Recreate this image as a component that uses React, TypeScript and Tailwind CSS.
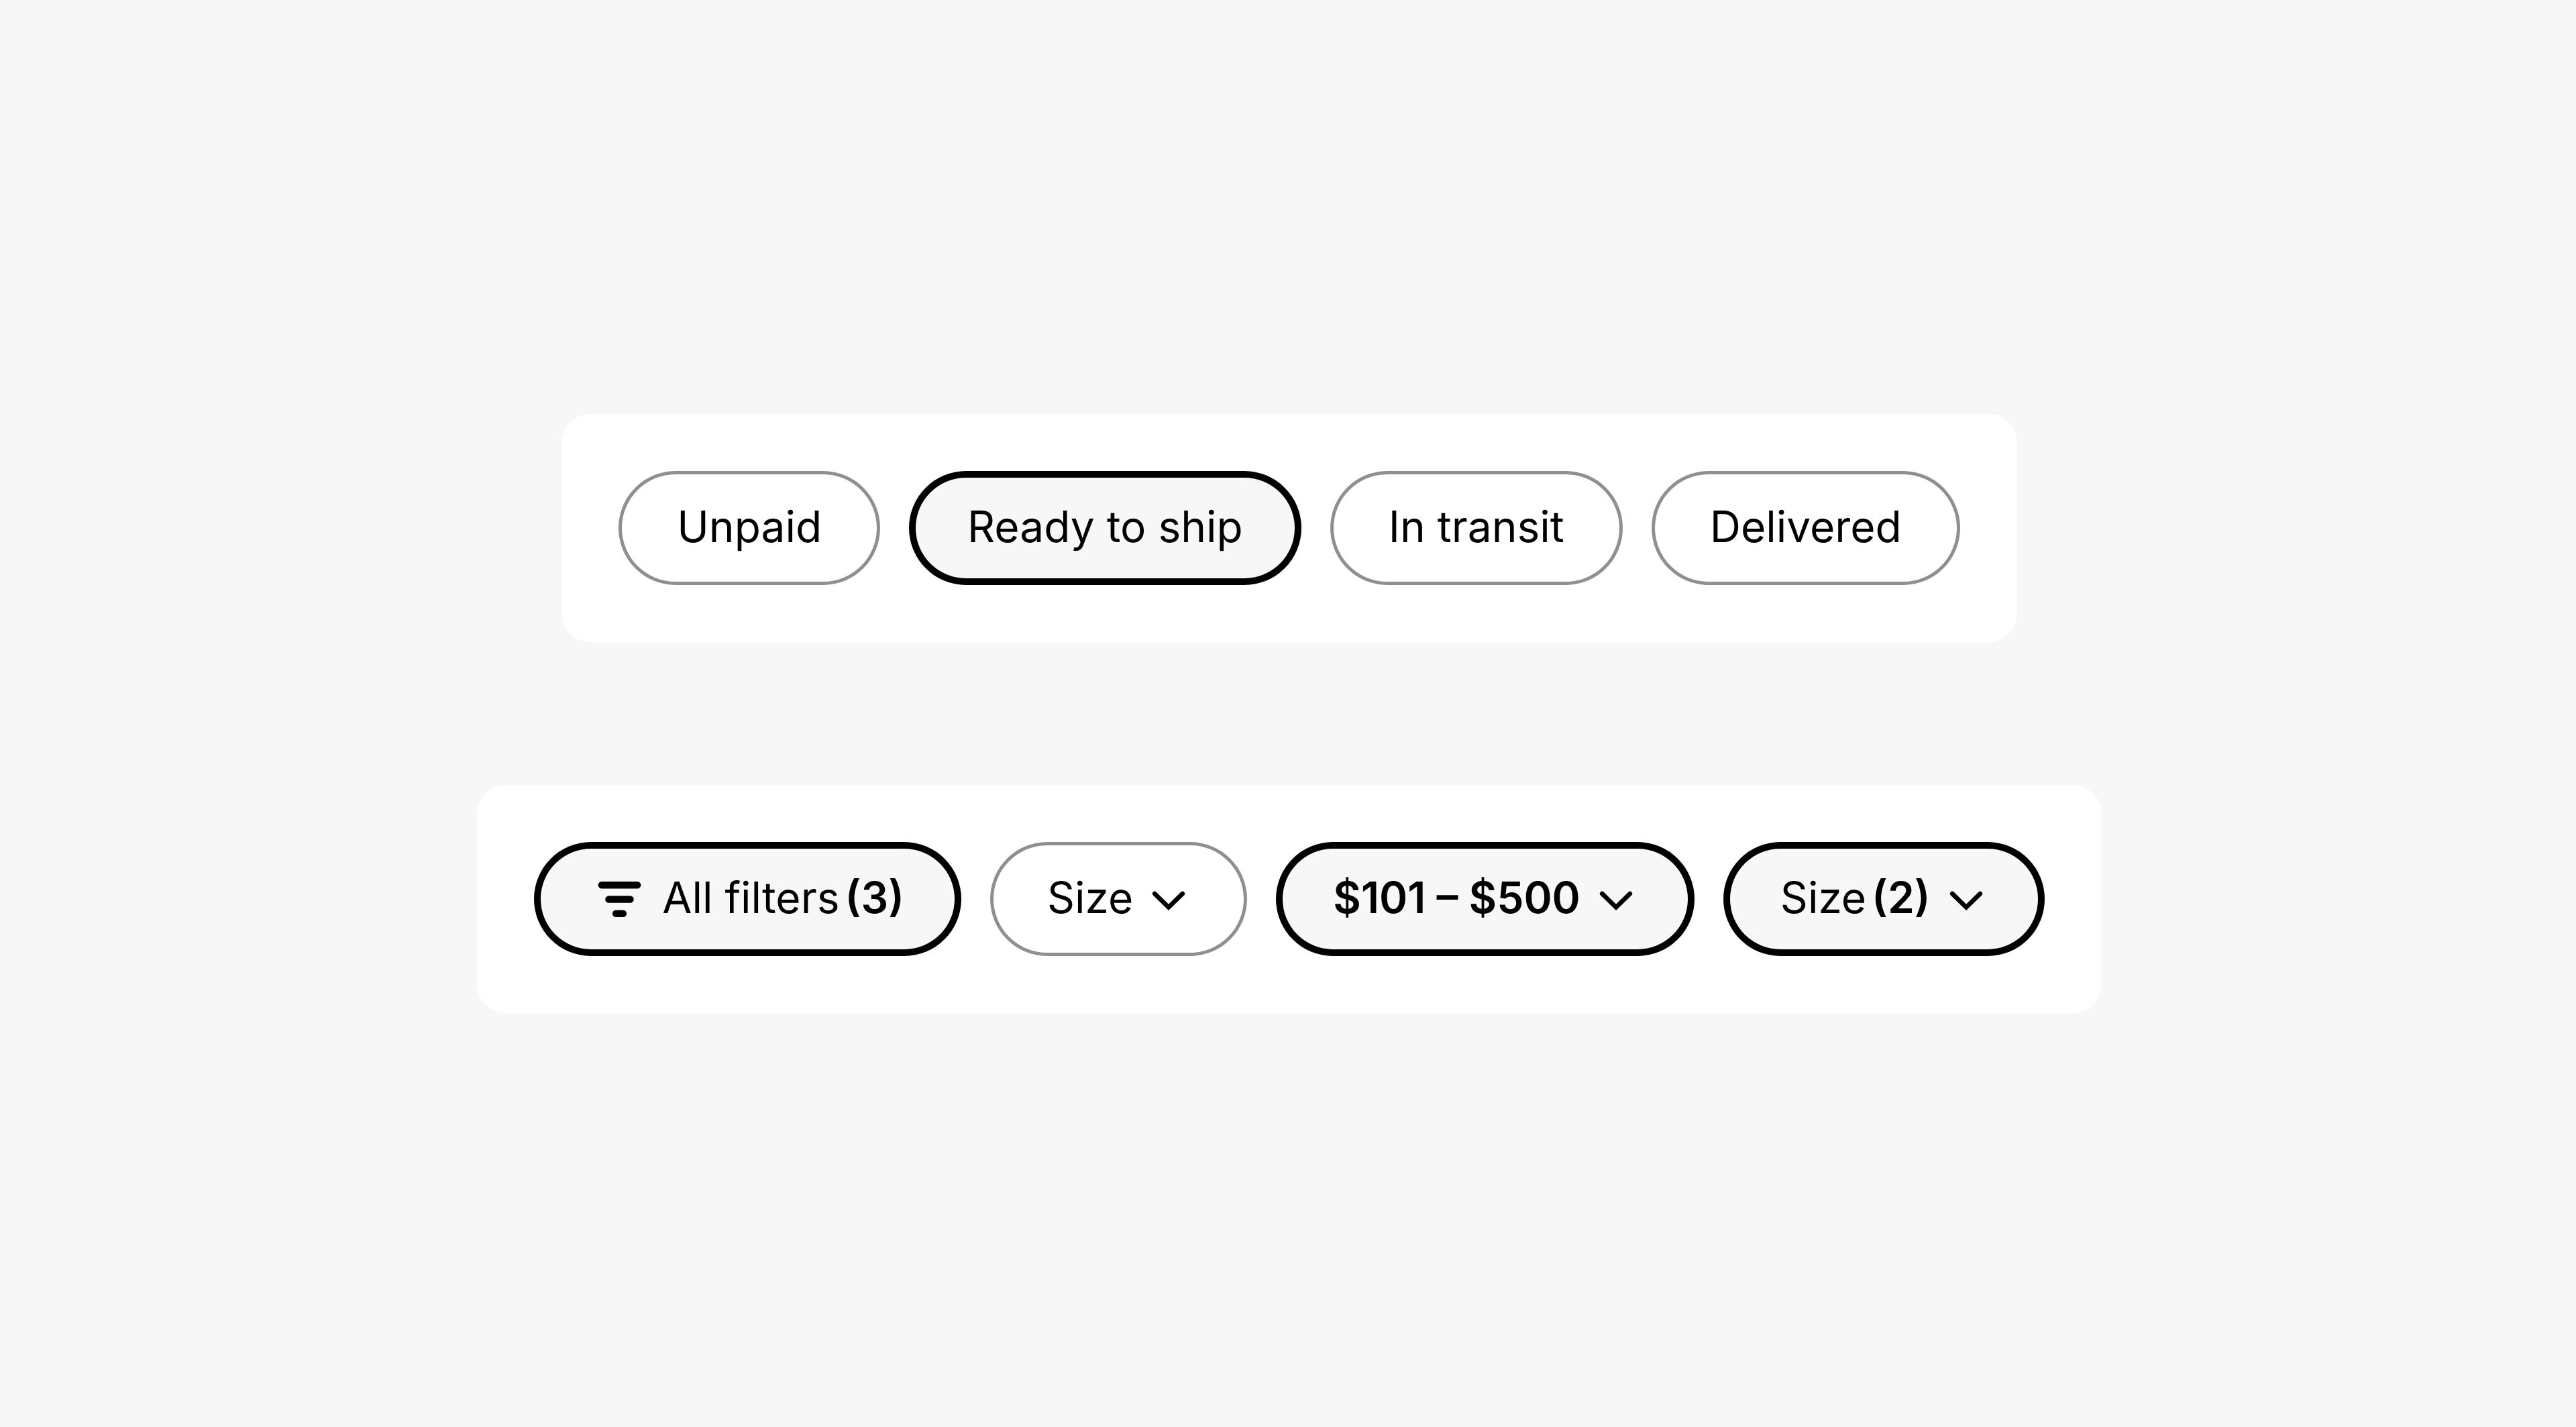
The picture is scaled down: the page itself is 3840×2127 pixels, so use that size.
import { useState } from 'react';
import type { ReactNode } from 'react';
import clsx from 'clsx';

const statuses = ['Unpaid', 'Ready to ship', 'In transit', 'Delivered'];

function FilterIcon() {
  return (
    <svg className="size-[85px]" viewBox="0 0 16 16" fill="none" stroke="currentColor" strokeWidth="2" strokeLinecap="round" aria-hidden="true">
      <path d="M3 4h10M5 8h6M7 12h2" />
    </svg>
  );
}

function ChevronIcon() {
  return (
    <svg className="size-16" viewBox="0 0 12 12" fill="none" stroke="currentColor" strokeWidth="1.25" strokeLinecap="round" aria-hidden="true">
      <path d="M2.1 4.5 6 8.3l3.9-3.8" />
    </svg>
  );
}

interface ChipProps {
  selected?: boolean;
  className?: string;
  onClick?: () => void;
  children: ReactNode;
}

function Chip({ selected = false, className = 'px-[85px]', onClick, children }: ChipProps) {
  return (
    <button
      type="button"
      aria-pressed={selected}
      onClick={onClick}
      className={clsx(
        'flex h-[170px] items-center gap-[21px] rounded-full inset-ring whitespace-nowrap',
        selected ? 'bg-[#f7f7f7] inset-ring-[10px] inset-ring-black' : 'bg-white inset-ring-[5px] inset-ring-[#8f8f8f]',
        className,
      )}
    >
      {children}
    </button>
  );
}

function Label({ text, count }: { text: string; count?: number }) {
  return (
    <span className="flex gap-2 pb-1">
      {text}
      {count ? <span className="font-semibold">({count})</span> : null}
    </span>
  );
}

function Card({ children }: { children: ReactNode }) {
  return <div className="flex gap-[43px] rounded-[43px] bg-white p-[85px]">{children}</div>;
}

export default function App() {
  const [status, setStatus] = useState('Ready to ship');

  return (
    <main className="flex min-h-screen flex-col items-center justify-center gap-[213px] bg-[#f7f7f7] pl-1 font-['Inter',sans-serif] text-[64px] leading-none text-black">
      {/* Order status */}
      <Card>
        {statuses.map(s => (
          <Chip key={s} selected={s === status} className="px-[87px]" onClick={() => setStatus(s)}>
            <Label text={s} />
          </Chip>
        ))}
      </Card>

      {/* Search filters */}
      <Card>
        <Chip selected>
          <FilterIcon />
          <Label text="All filters" count={3} />
        </Chip>
        <Chip>
          <Label text="Size" />
          <ChevronIcon />
        </Chip>
        <Chip selected>
          <span className="pb-1 font-semibold">$101 – $500</span>
          <ChevronIcon />
        </Chip>
        <Chip selected>
          <Label text="Size" count={2} />
          <ChevronIcon />
        </Chip>
      </Card>
    </main>
  );
}
